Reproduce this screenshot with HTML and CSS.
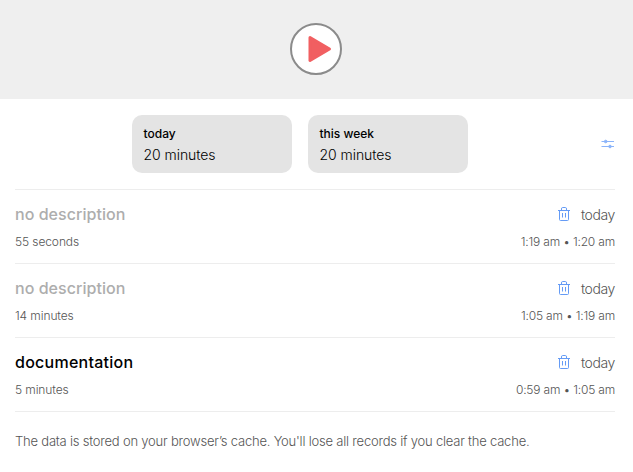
FILE: index.html
```html
<!DOCTYPE html>
<html lang="en">
<head>
<meta charset="utf-8">
<title>Time tracker</title>
<link rel="stylesheet" href="styles.css">
</head>
<body>
<svg width="0" height="0" class="sprite" aria-hidden="true">
  <symbol id="trash" viewBox="0 0 14 14">
    <path d="M1 3.500h12M4.500 3.500V2q0-1.500 1-1.500h3q1 0 1 1.500v1.500M2.500 3.500v9q0 1 1 1h7q1 0 1-1v-9M5.500 6v4.500M8.500 6v4.500"/>
  </symbol>
</svg>
<header class="timer">
  <button class="play" aria-label="Start">
    <svg viewBox="0 0 52 52"><path d="M20 14.500 L39.500 26 L20 37.500Z"/></svg>
  </button>
</header>
<main>
  <section class="summary">
    <div class="card"><h2>today</h2><p>20 minutes</p></div>
    <div class="card"><h2>this week</h2><p>20 minutes</p></div>
    <button class="settings" aria-label="Settings">
      <svg viewBox="0 0 14 12"><path d="M.5 3.500h12.500M.5 8.500h12.500"/><circle cx="4.700" cy="3.500" r="1.300"/><circle cx="9" cy="8.500" r="1.300"/></svg>
    </button>
  </section>
  <ul class="records">
    <li>
      <div class="row"><h3 class="empty">no description</h3><svg class="trash"><use href="#trash"/></svg><span class="day">today</span></div>
      <div class="row meta"><span class="length">55 seconds</span><span class="range">1:19 am • 1:20 am</span></div>
    </li>
    <li>
      <div class="row"><h3 class="empty">no description</h3><svg class="trash"><use href="#trash"/></svg><span class="day">today</span></div>
      <div class="row meta"><span class="length">14 minutes</span><span class="range">1:05 am • 1:19 am</span></div>
    </li>
    <li>
      <div class="row"><h3>documentation</h3><svg class="trash"><use href="#trash"/></svg><span class="day">today</span></div>
      <div class="row meta"><span class="length">5 minutes</span><span class="range">0:59 am • 1:05 am</span></div>
    </li>
  </ul>
  <p class="note">The data is stored on your browser’s cache. You'll lose all records if you clear the cache.</p>
</main>
</body>
</html>
```
FILE: styles.css
```css
* { box-sizing: border-box; margin: 0; padding: 0; }
body { background: #fff; color: #000; font-family: Inter, "Open Sans", sans-serif; font-weight: 300; }
button { border: 0; background: none; }
.sprite { display: block; position: absolute; }
.timer { height: 99px; background: #efefef; display: flex; justify-content: center; align-items: flex-start; padding: 23px 2px 0 0; }
.play { width: 52px; height: 52px; border: 2px solid #8b8b8b; border-radius: 50%; background: #fff; }
.play svg { display: block; width: 52px; height: 52px; margin: -2px; fill: #f15f61; stroke: #f15f61; stroke-width: 3; stroke-linejoin: round; }
main { padding: 16px 18px 0 15px; }
.summary { display: grid; grid-template-columns: 160px 160px 1fr; column-gap: 16px; padding-left: 117px; height: 74px; align-items: start; }
.card { height: 58px; border-radius: 10px; background: #e4e4e4; padding: 10px 11.5px; }
.card h2 { font-size: 12px; line-height: 18px; font-weight: 500; letter-spacing: 0; }
.card p { font-size: 14px; line-height: 24px; letter-spacing: -.05px; }
.settings { justify-self: end; margin: 23px 0 0; width: 14px; height: 12px; }
.settings svg { display: block; width: 14px; height: 12px; fill: #8bb4fa; stroke: #8bb4fa; stroke-width: 1; }
.records { list-style: none; }
.records li { height: 74px; border-top: 1px solid #ededed; padding-top: 12px; }
.records li:last-child { height: 75px; border-bottom: 1px solid #ededed; }
.row { display: flex; align-items: center; height: 24px; }
.row h3 { font-size: 16px; line-height: 24px; font-weight: 500; letter-spacing: .26px; margin-right: auto; }
.row .empty { color: #adadad; letter-spacing: .04px; }
.trash { width: 14px; height: 14px; margin-right: 10px; fill: none; stroke: #659bf5; stroke-width: 1; }
.day { font-size: 14px; color: #555; letter-spacing: -.4px; }
.meta { margin-top: 3px; font-size: 12px; color: #555; justify-content: space-between; }
.length { letter-spacing: -.1px; }
.range { letter-spacing: -.18px; }
.note { margin-top: 19px; font-size: 13px; line-height: 20px; color: #555; letter-spacing: -.21px; white-space: nowrap; }
```
